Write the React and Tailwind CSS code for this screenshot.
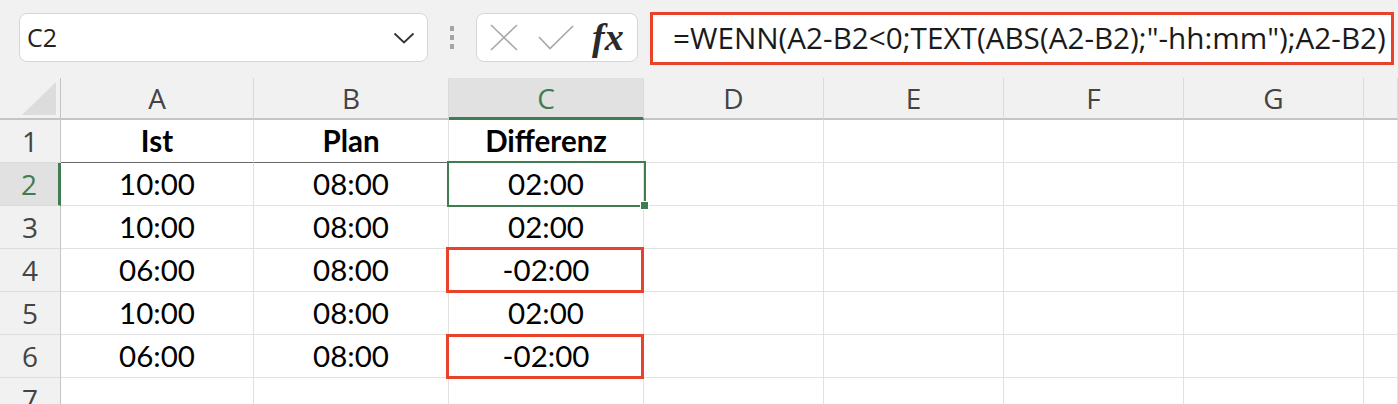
import React from "react";

const COLS = [
  { k: "A", w: "w-[193px]" },
  { k: "B", w: "w-[195px]" },
  { k: "C", w: "w-[195px]" },
  { k: "D", w: "w-[180px]" },
  { k: "E", w: "w-[180px]" },
  { k: "F", w: "w-[180px]" },
  { k: "G", w: "w-[180px]" },
  { k: "H", w: "flex-1" },
];

const ROWS = [
  ["Ist", "Plan", "Differenz"],
  ["10:00", "08:00", "02:00"],
  ["10:00", "08:00", "02:00"],
  ["06:00", "08:00", "-02:00"],
  ["10:00", "08:00", "02:00"],
  ["06:00", "08:00", "-02:00"],
  ["", "", ""],
];

const ui = { fontFamily: '"Open Sans", "Noto Sans", sans-serif' };
const cellFont = { fontFamily: 'Lato, "Liberation Sans", sans-serif' };

function Toolbar() {
  return (
    <div className="flex h-[78px] items-start bg-[#f1f1f1] pl-[19px] pt-[13px]">
      <div className="flex h-[49px] w-[409px] items-center justify-between rounded-[8px] border border-[#d6d6d6] bg-white pl-[7px] pr-[12px]">
        <span className="text-[25px] text-[#222]" style={ui}>C2</span>
        <svg width="22" height="12" viewBox="0 0 22 12" fill="none" stroke="#333" strokeWidth="1.8">
          <path d="M1.5 1.5 L11 10.5 L20.5 1.5" />
        </svg>
      </div>
      <div className="flex h-[49px] w-[48px] flex-col items-center justify-center gap-[4px]">
        <div className="h-[5px] w-[4px] bg-[#a4a4a4]" />
        <div className="h-[5px] w-[4px] bg-[#a4a4a4]" />
        <div className="h-[5px] w-[4px] bg-[#a4a4a4]" />
      </div>
      <div className="flex h-[49px] w-[162px] items-center rounded-[8px] border border-[#d6d6d6] bg-white">
        <svg className="ml-[13px]" width="28" height="27" viewBox="0 0 28 27" fill="none" stroke="#a8a8a8" strokeWidth="1.6">
          <path d="M1 1 L27 26 M27 1 L1 26" />
        </svg>
        <svg className="ml-[20px]" width="36" height="25" viewBox="0 0 36 25" fill="none" stroke="#a8a8a8" strokeWidth="1.6">
          <path d="M1 12 L12 23.5 L35 1" />
        </svg>
        <span
          className="ml-[18px] mt-[-2px] text-[38px] font-bold italic leading-none text-[#2a2a2a]"
          style={{ fontFamily: '"Liberation Serif", "DejaVu Serif", serif' }}
        >
          fx
        </span>
      </div>
      <div className="ml-[12px] mt-[-1px] flex h-[53px] w-[744px] items-center border-[3px] border-[#e8432a] bg-white pl-[20px]">
        <span className="whitespace-nowrap text-[29.7px] text-[#1a1a1a]" style={ui}>
          =WENN(A2-B2&lt;0;TEXT(ABS(A2-B2);"-hh:mm");A2-B2)
        </span>
      </div>
    </div>
  );
}

function HeaderRow() {
  return (
    <div className="flex h-[42px] bg-[#f1f1f1]">
      <div className="relative w-[61px] border-r border-b-2 border-[#c4c4c4]">
        <svg className="absolute left-[22px] top-[4px]" width="34" height="33" viewBox="0 0 34 33">
          <path d="M34 0 L34 33 L0 33 Z" fill="#dcdcdc" />
        </svg>
      </div>
      {COLS.map((c) => {
        const sel = c.k === "C";
        return (
          <div
            key={c.k}
            className={`${c.w} flex items-center justify-center border-r border-[#dadada] ${
              sel
                ? "border-b-[3px] border-b-[#3f7c50] bg-[#e1e1e1] text-[#3f7c50]"
                : "border-b-2 border-b-[#c4c4c4] text-[#444]"
            } text-[28px]`}
            style={ui}
          >
            {c.k === "H" ? "" : c.k}
          </div>
        );
      })}
    </div>
  );
}

function Row({ i, data }) {
  const n = i + 1;
  const isSelRow = n === 2;
  return (
    <div className="flex h-[43px]">
      <div
        className={`flex w-[61px] items-center justify-center border-b border-[#dcdcdc] text-[28px] ${
          isSelRow
            ? "border-r-[3px] border-r-[#3f7c50] bg-[#e1e1e1] text-[#3f7c50]"
            : "border-r border-r-[#c4c4c4] bg-[#f1f1f1] text-[#444]"
        }`}
        style={ui}
      >
        {n}
      </div>
      {COLS.map((c, ci) => {
        const val = ci < 3 ? data[ci] : "";
        const darkBottom = n === 1 && ci < 2;
        return (
          <div
            key={c.k}
            className={`${c.w} flex items-center justify-center border-r border-[#e1e1e1] bg-white text-[29.5px] text-black ${
              darkBottom ? "border-b border-b-[#6a6a6a]" : "border-b border-b-[#e1e1e1]"
            } ${n === 1 ? "font-bold" : ""}`}
            style={cellFont}
          >
            {val}
          </div>
        );
      })}
    </div>
  );
}

export default function App() {
  return (
    <div className="relative h-[404px] w-[1398px] overflow-hidden bg-[#f1f1f1]">
      <Toolbar />
      <HeaderRow />
      <div className="relative">
        {ROWS.map((r, i) => (
          <Row key={i} i={i} data={r} />
        ))}
        {/* selection C2 */}
        <div className="pointer-events-none absolute left-[447px] top-[41px] h-[46px] w-[199px] border-2 border-[#3f7c50]" />
        <div className="pointer-events-none absolute left-[640px] top-[81px] h-[9px] w-[9px] border border-white bg-[#3f7c50]" />
        {/* red highlight boxes */}
        <div className="pointer-events-none absolute left-[446px] top-[127px] h-[46px] w-[198px] border-[3px] border-[#e8432a]" />
        <div className="pointer-events-none absolute left-[446px] top-[214px] h-[45px] w-[198px] border-[3px] border-[#e8432a]" />
      </div>
    </div>
  );
}
